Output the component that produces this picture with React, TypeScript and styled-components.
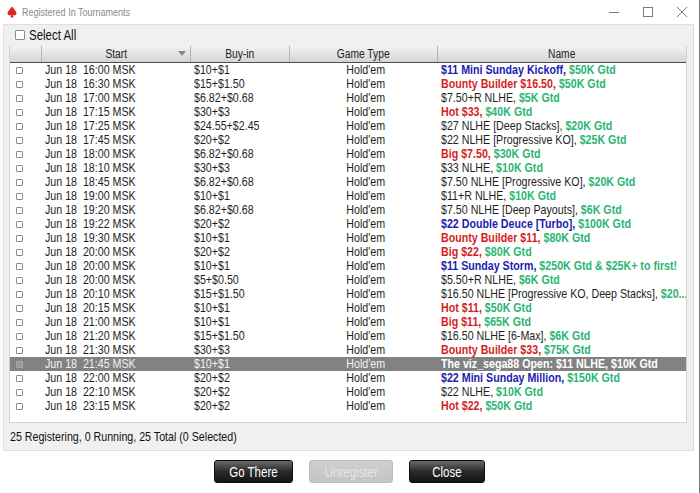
import styled, { createGlobalStyle } from "styled-components";

const GlobalStyle = createGlobalStyle`
    html, body {
        margin: 0;
        padding: 0;
        background: #ffffff;
    }
    body {
        font-family: "Liberation Sans Narrow", "Liberation Sans", Arial, sans-serif;
    }
`;

type Tone = "plain" | "blue" | "red" | "green" | "sel";

type Part = { text: string; tone: Tone };

type Row = {
    start: string;
    buyIn: string;
    name: Part[];
    selected?: boolean;
};

const p = (text: string): Part => ({ text, tone: "plain" });
const b = (text: string): Part => ({ text, tone: "blue" });
const r = (text: string): Part => ({ text, tone: "red" });
const g = (text: string): Part => ({ text, tone: "green" });

const rows: Row[] = [
    { start: "16:00", buyIn: "$10+$1", name: [b("$11 Mini Sunday Kickoff,"), g(" $50K Gtd")] },
    { start: "16:30", buyIn: "$15+$1.50", name: [r("Bounty Builder $16.50,"), g(" $50K Gtd")] },
    { start: "17:00", buyIn: "$6.82+$0.68", name: [p("$7.50+R NLHE,"), g(" $5K Gtd")] },
    { start: "17:15", buyIn: "$30+$3", name: [r("Hot $33,"), g(" $40K Gtd")] },
    { start: "17:25", buyIn: "$24.55+$2.45", name: [p("$27 NLHE [Deep Stacks],"), g(" $20K Gtd")] },
    { start: "17:45", buyIn: "$20+$2", name: [p("$22 NLHE [Progressive KO],"), g(" $25K Gtd")] },
    { start: "18:00", buyIn: "$6.82+$0.68", name: [r("Big $7.50,"), g(" $30K Gtd")] },
    { start: "18:10", buyIn: "$30+$3", name: [p("$33 NLHE,"), g(" $10K Gtd")] },
    { start: "18:45", buyIn: "$6.82+$0.68", name: [p("$7.50 NLHE [Progressive KO],"), g(" $20K Gtd")] },
    { start: "19:00", buyIn: "$10+$1", name: [p("$11+R NLHE,"), g(" $10K Gtd")] },
    { start: "19:20", buyIn: "$6.82+$0.68", name: [p("$7.50 NLHE [Deep Payouts],"), g(" $6K Gtd")] },
    { start: "19:22", buyIn: "$20+$2", name: [b("$22 Double Deuce [Turbo],"), g(" $100K Gtd")] },
    { start: "19:30", buyIn: "$10+$1", name: [r("Bounty Builder $11,"), g(" $80K Gtd")] },
    { start: "20:00", buyIn: "$20+$2", name: [r("Big $22,"), g(" $80K Gtd")] },
    { start: "20:00", buyIn: "$10+$1", name: [b("$11 Sunday Storm,"), g(" $250K Gtd & $25K+ to first!")] },
    { start: "20:00", buyIn: "$5+$0.50", name: [p("$5.50+R NLHE,"), g(" $6K Gtd")] },
    { start: "20:10", buyIn: "$15+$1.50", name: [p("$16.50 NLHE [Progressive KO, Deep Stacks],"), g(" $20...")] },
    { start: "20:15", buyIn: "$10+$1", name: [r("Hot $11,"), g(" $50K Gtd")] },
    { start: "21:00", buyIn: "$10+$1", name: [r("Big $11,"), g(" $65K Gtd")] },
    { start: "21:20", buyIn: "$15+$1.50", name: [p("$16.50 NLHE [6-Max],"), g(" $6K Gtd")] },
    { start: "21:30", buyIn: "$30+$3", name: [r("Bounty Builder $33,"), g(" $75K Gtd")] },
    { start: "21:45", buyIn: "$10+$1", name: [{ text: "The viz_sega88 Open: $11 NLHE, $10K Gtd", tone: "sel" }], selected: true },
    { start: "22:00", buyIn: "$20+$2", name: [b("$22 Mini Sunday Million,"), g(" $150K Gtd")] },
    { start: "22:10", buyIn: "$20+$2", name: [p("$22 NLHE,"), g(" $10K Gtd")] },
    { start: "23:15", buyIn: "$20+$2", name: [r("Hot $22,"), g(" $50K Gtd")] },
];

// the client font is a condensed sans; squeeze the regular one to its width
const Narrow = styled.span<{ $origin?: "left" | "center" }>`
    display: inline-block;
    white-space: nowrap;
    transform: scaleX(0.82);
    transform-origin: ${(pr) => pr.$origin ?? "left"} center;
`;

const Window = styled.div`
    width: 700px;
    height: 493px;
    box-sizing: border-box;
    border-right: 1px solid #7a7a7a;
    background: #ffffff;
    display: flex;
    flex-direction: column;
`;

const TitleBar = styled.div`
    height: 23px;
    display: flex;
    align-items: center;
    padding-left: 6px;
    gap: 4px;
`;

const TitleText = styled.span`
    font-family: "Liberation Sans", Arial, sans-serif;
    font-size: 11px;
    color: #8a8a8a;
    flex: 1;
`;

const WinControls = styled.div`
    display: flex;
    align-items: center;
    height: 23px;
`;

const WinButton = styled.div`
    width: 34px;
    height: 18px;
    display: flex;
    align-items: center;
    justify-content: center;
`;

const Panel = styled.div`
    margin: 1px 5px 0 3px;
    height: 427px;
    box-sizing: border-box;
    background: #f0f0f0;
    border: 1px solid #dedede;
    display: flex;
    flex-direction: column;
    padding: 2px 6px 0 5px;
`;

const SelectAll = styled.label`
    display: flex;
    align-items: center;
    gap: 4px;
    height: 16px;
    padding-left: 6px;
    font-size: 14px;
    color: #111;
`;

const Box = styled.span<{ $big?: boolean; $dim?: boolean }>`
    display: inline-block;
    box-sizing: border-box;
    width: ${(pr) => (pr.$big ? "10px" : "7px")};
    height: ${(pr) => (pr.$big ? "10px" : "7px")};
    border: 1px solid ${(pr) => (pr.$dim ? "#a6a6a6" : "#8c8c8c")};
    background: ${(pr) => (pr.$dim ? "#9a9a9a" : "#ffffff")};
    border-radius: 1px;
`;

const Table = styled.div`
    margin-top: 3px;
    height: 376px;
    background: #ffffff;
    border: 1px solid #d0d0d0;
    border-top: none;
    display: flex;
    flex-direction: column;
`;

const cols = "32px 149px 99px 148px 1fr";

const HeaderRow = styled.div`
    display: grid;
    grid-template-columns: ${cols};
    height: 16px;
    background: linear-gradient(#f2f2f2, #e2e2e2 55%, #d4d4d4);
    border-bottom: 1px solid #4d4d4d;
`;

const HeaderCell = styled.div<{ $last?: boolean }>`
    position: relative;
    display: flex;
    align-items: center;
    justify-content: center;
    font-size: 12.5px;
    color: #222;
    border-right: ${(pr) => (pr.$last ? "none" : "1px solid #b4b4b4")};
`;

const SortArrow = styled.span`
    position: absolute;
    right: 4px;
    top: 5px;
    width: 0;
    height: 0;
    border-left: 4px solid transparent;
    border-right: 4px solid transparent;
    border-top: 5px solid #8a8a8a;
`;

const BodyRow = styled.div<{ $selected?: boolean }>`
    display: grid;
    grid-template-columns: ${cols};
    height: 14px;
    align-items: center;
    font-size: 13px;
    line-height: 14px;
    background: ${(pr) => (pr.$selected ? "#828282" : "transparent")};
    color: ${(pr) => (pr.$selected ? "#f2f2f2" : "#1e1e1e")};
`;

const CheckCell = styled.div`
    display: flex;
    align-items: center;
    padding-left: 6px;
`;

const Cell = styled.div<{ $center?: boolean }>`
    white-space: nowrap;
    overflow: hidden;
    padding-left: 3px;
    text-align: ${(pr) => (pr.$center ? "center" : "left")};
`;

const toneColor: Record<Tone, string> = {
    plain: "#1e1e1e",
    blue: "#1c1cb0",
    red: "#d41e1e",
    green: "#2cb574",
    sel: "#ffffff",
};

const NamePart = styled.span<{ $tone: Tone }>`
    color: ${(pr) => toneColor[pr.$tone]};
    font-weight: ${(pr) => (pr.$tone === "plain" ? "normal" : "bold")};
`;

const Status = styled.div`
    flex: 1;
    display: flex;
    align-items: center;
    padding-left: 1px;
    font-size: 13px;
    color: #111;
`;

const ButtonBar = styled.div`
    flex: 1;
    display: flex;
    justify-content: center;
    align-items: flex-start;
    padding-top: 9px;
    gap: 16px;
`;

const ActionButton = styled.div<{ $disabled?: boolean; $w: number }>`
    width: ${(pr) => pr.$w}px;
    height: 23px;
    box-sizing: border-box;
    border-radius: 3px;
    display: flex;
    align-items: center;
    justify-content: center;
    font-size: 14px;
    color: ${(pr) => (pr.$disabled ? "#e6e6e6" : "#ffffff")};
    background: ${(pr) =>
        pr.$disabled
            ? "linear-gradient(#cfcfcf, #c4c4c4)"
            : "linear-gradient(#6a6a6a, #2a2a2a 50%, #141414)"};
    border: 1px solid ${(pr) => (pr.$disabled ? "#bdbdbd" : "#0c0c0c")};
`;

function Spade() {
    return (
        <svg width="12" height="12" viewBox="0 0 12 12">
            <path d="M6 0.5 L9.5 5 Q11.5 7.5 9.5 9 Q7.8 10 6.6 8.4 L7.6 11.5 L4.4 11.5 L5.4 8.4 Q4.2 10 2.5 9 Q0.5 7.5 2.5 5 Z" fill="#d9261c" />
        </svg>
    );
}

export default function App() {
    return (
        <>
            <GlobalStyle />
            <Window>
                <TitleBar>
                    <Spade />
                    <TitleText>
                        <Narrow>Registered In Tournaments</Narrow>
                    </TitleText>
                    <WinControls>
                        <WinButton>
                            <svg width="10" height="10" viewBox="0 0 10 10">
                                <line x1="0" y1="5.5" x2="10" y2="5.5" stroke="#7a7a7a" strokeWidth="1" />
                            </svg>
                        </WinButton>
                        <WinButton>
                            <svg width="10" height="10" viewBox="0 0 10 10">
                                <rect x="0.5" y="0.5" width="9" height="9" fill="none" stroke="#7a7a7a" strokeWidth="1" />
                            </svg>
                        </WinButton>
                        <WinButton>
                            <svg width="10" height="10" viewBox="0 0 10 10">
                                <path d="M0 0 L10 10 M10 0 L0 10" stroke="#7a7a7a" strokeWidth="1" />
                            </svg>
                        </WinButton>
                    </WinControls>
                </TitleBar>
                <Panel>
                    <SelectAll>
                        <Box $big />
                        <Narrow>Select All</Narrow>
                    </SelectAll>
                    <Table>
                        <HeaderRow>
                            <HeaderCell />
                            <HeaderCell>
                                <Narrow $origin="center">Start</Narrow>
                                <SortArrow />
                            </HeaderCell>
                            <HeaderCell>
                                <Narrow $origin="center">Buy-in</Narrow>
                            </HeaderCell>
                            <HeaderCell>
                                <Narrow $origin="center">Game Type</Narrow>
                            </HeaderCell>
                            <HeaderCell $last>
                                <Narrow $origin="center">Name</Narrow>
                            </HeaderCell>
                        </HeaderRow>
                        {rows.map((row, i) => (
                            <BodyRow key={i} $selected={row.selected}>
                                <CheckCell>
                                    <Box $dim={row.selected} />
                                </CheckCell>
                                <Cell>
                                    <Narrow>Jun 18&nbsp;&nbsp;{row.start} MSK</Narrow>
                                </Cell>
                                <Cell>
                                    <Narrow>{row.buyIn}</Narrow>
                                </Cell>
                                <Cell $center>
                                    <Narrow $origin="center">Hold'em</Narrow>
                                </Cell>
                                <Cell>
                                    <Narrow>
                                        {row.name.map((part, j) => (
                                            <NamePart key={j} $tone={part.tone}>
                                                {part.text}
                                            </NamePart>
                                        ))}
                                    </Narrow>
                                </Cell>
                            </BodyRow>
                        ))}
                    </Table>
                    <Status>
                        <Narrow>25 Registering, 0 Running, 25 Total (0 Selected)</Narrow>
                    </Status>
                </Panel>
                <ButtonBar>
                    <ActionButton $w={79}>
                        <Narrow $origin="center">Go There</Narrow>
                    </ActionButton>
                    <ActionButton $w={84} $disabled>
                        <Narrow $origin="center">Unregister</Narrow>
                    </ActionButton>
                    <ActionButton $w={76}>
                        <Narrow $origin="center">Close</Narrow>
                    </ActionButton>
                </ButtonBar>
            </Window>
        </>
    );
}
